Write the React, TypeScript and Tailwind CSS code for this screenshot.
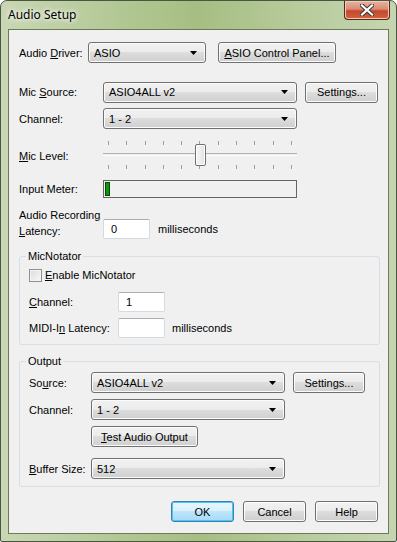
import React from "react";

const font = "font-['Liberation_Sans',Arial,sans-serif] text-[11px] text-black leading-[14px]";

const Arrow = () => (
  <svg width="7" height="4" viewBox="0 0 7 4">
    <polygon points="0,0 7,0 3.5,4" fill="#000" />
  </svg>
);

const Combo = ({ value, w }: { value: string; w: string }) => (
  <div
    className={`${w} h-[21px] flex items-center justify-between pl-[5px] pr-[8px] border border-[#707070] rounded-[3px] bg-[linear-gradient(#f2f2f2_0%,#ebebeb_50%,#dddddd_50%,#cfcfcf_100%)] shadow-[inset_0_0_0_1px_#fbfbfb]`}
  >
    <span>{value}</span>
    <Arrow />
  </div>
);

const Button = ({ children, w, primary }: { children: React.ReactNode; w: string; primary?: boolean }) => (
  <div
    className={
      primary
        ? `${w} h-[21px] flex items-center justify-center border border-[#3c7fb1] rounded-[3px] bg-[linear-gradient(#eaf6fd_0%,#d9f0fc_50%,#bee6fd_50%,#a7d9f5_100%)] shadow-[inset_0_0_0_1px_#48c6f4]`
        : `${w} h-[21px] flex items-center justify-center border border-[#707070] rounded-[3px] bg-[linear-gradient(#f2f2f2_0%,#ebebeb_50%,#dddddd_50%,#cfcfcf_100%)] shadow-[inset_0_0_0_1px_#fcfcfc]`
    }
  >
    {children}
  </div>
);

const TextBox = ({ value }: { value?: string }) => (
  <div className="w-[47px] h-[20px] flex items-center pl-[7px] bg-white border border-[#d5dae1] border-t-[#abadb3] rounded-[2px]">
    {value}
  </div>
);

const Ticks = () => (
  <div className="flex justify-between px-[5px] h-[4px]">
    {Array.from({ length: 11 }).map((_, i) => (
      <div key={i} className="w-px h-[4px] bg-[#a0a0a0]" />
    ))}
  </div>
);

const Slider = () => (
  <div className="relative w-[194px] h-[34px] pt-[2px]">
    <Ticks />
    <div className="mt-[8px] h-[3px] border-t border-[#b4b4b4] bg-[#e7eaea] border-b border-b-white" />
    <div className="mt-[9px]">
      <Ticks />
    </div>
    <div className="absolute left-[92px] top-[5px] w-[11px] h-[22px] border border-[#707070] rounded-[2px] bg-[linear-gradient(90deg,#f7f7f7,#e2e2e2)] shadow-[inset_0_0_0_1px_#fff]" />
  </div>
);

const CloseIcon = () => (
  <svg width="14" height="12" viewBox="0 0 14 12">
    <path d="M2 1.5 L12 10.5 M12 1.5 L2 10.5" stroke="#3a3a3a" strokeWidth="4.2" strokeLinecap="square" />
    <path d="M2 1.5 L12 10.5 M12 1.5 L2 10.5" stroke="#ffffff" strokeWidth="2.2" strokeLinecap="square" />
  </svg>
);

export default function App() {
  return (
    <div className="w-[397px] h-[542px] bg-white">
      <div className="w-[397px] h-[542px] flex flex-col border border-[#4b5543] rounded-t-[7px] rounded-b-[2px] bg-[linear-gradient(90deg,#c9d7b4_0%,#b2c894_30%,#a6be82_50%,#b7cb9b_75%,#c6d5b0_100%)]">
        {/* title bar */}
        <div className="h-[28px] flex items-start justify-between pl-[7px] pr-[6px]">
          <span className="mt-[6px] font-['Noto_Sans',sans-serif] text-[12px] leading-[16px] text-black [text-shadow:0_0_6px_#ffffff,0_0_4px_#ffffff]">
            Audio Setup
          </span>
          <div className="w-[46px] h-[19px] flex items-center justify-center border border-[#5d2418] border-t-0 rounded-b-[4px] bg-[linear-gradient(#e8b4a4_0%,#d98c74_45%,#c5482c_55%,#d0643f_100%)] shadow-[inset_0_0_0_1px_#f3c9bb]">
            <CloseIcon />
          </div>
        </div>

        {/* client */}
        <div className={`mx-[7px] h-[505px] border border-[#6c7a5b] bg-[#f0f0f0] flex flex-col pl-[10px] pr-[10px] ${font}`}>
          <div className="mt-[12px] flex items-center">
            <span className="w-[69px]">Audio <u>D</u>river:</span>
            <Combo value="ASIO" w="w-[118px]" />
            <div className="ml-[12px]">
              <Button w="w-[118px]"><span><u>A</u>SIO Control Panel...</span></Button>
            </div>
          </div>

          <div className="mt-[18px] flex items-center h-[22px]">
            <span className="w-[84px]">Mic <u>S</u>ource:</span>
            <Combo value="ASIO4ALL v2" w="w-[194px]" />
            <div className="ml-[8px]">
              <Button w="w-[73px]"><span>Settin<u>g</u>s...</span></Button>
            </div>
          </div>

          <div className="mt-[5px] flex items-center">
            <span className="w-[84px]">Channel:</span>
            <Combo value="1 - 2" w="w-[194px]" />
          </div>

          <div className="mt-[10px] flex items-center">
            <span className="w-[84px]"><u>M</u>ic Level:</span>
            <Slider />
          </div>

          <div className="mt-[7px] flex items-center">
            <span className="w-[84px]">Input Meter:</span>
            <div className="w-[194px] h-[18px] border border-[#646464] p-[1px]">
              <div className="w-[5px] h-full bg-[#00a000] border border-[#1b3a1b]" />
            </div>
          </div>

          <div className="mt-[9px] flex items-start">
            <span className="w-[84px] leading-[16px]">Audio Recording<br /><u>L</u>atency:</span>
            <div className="mt-[12px] flex items-center">
              <TextBox value="0" />
              <span className="ml-[8px]">milliseconds</span>
            </div>
          </div>

          <fieldset className="mt-[10px] w-[361px] border border-[#d5dfe5] rounded-[3px] pl-[9px] pb-[6px]">
            <legend className="-ml-[3px] px-[2px]">MicNotator</legend>
            <div className="mt-[5px] flex items-center h-[14px]">
              <div className="w-[13px] h-[13px] border border-[#8e8f8f] bg-[linear-gradient(135deg,#dcdcdc,#f8f8f8)] shadow-[inset_0_0_0_1px_#f4f4f4]" />
              <span className="ml-[3px]"><u>E</u>nable MicNotator</span>
            </div>
            <div className="mt-[10px] flex items-center">
              <span className="w-[89px]"><u>C</u>hannel:</span>
              <TextBox value="1" />
            </div>
            <div className="mt-[6px] flex items-center">
              <span className="w-[89px]">MIDI-I<u>n</u> Latency:</span>
              <TextBox />
              <span className="ml-[7px]">milliseconds</span>
            </div>
          </fieldset>

          <fieldset className="mt-[9px] w-[361px] border border-[#d5dfe5] rounded-[3px] pl-[9px] pb-[7px]">
            <legend className="-ml-[3px] px-[2px]">Output</legend>
            <div className="mt-[4px] flex items-center">
              <span className="w-[62px]">So<u>u</u>rce:</span>
              <Combo value="ASIO4ALL v2" w="w-[194px]" />
              <div className="ml-[8px]">
                <Button w="w-[72px]"><span>Settings...</span></Button>
              </div>
            </div>
            <div className="mt-[6px] flex items-center">
              <span className="w-[62px]">Channel:</span>
              <Combo value="1 - 2" w="w-[194px]" />
            </div>
            <div className="mt-[6px] pl-[62px]">
              <Button w="w-[107px]"><span><u>T</u>est Audio Output</span></Button>
            </div>
            <div className="mt-[11px] flex items-center">
              <span className="w-[62px]"><u>B</u>uffer Size:</span>
              <Combo value="512" w="w-[194px]" />
            </div>
          </fieldset>

          <div className="mt-[14px] flex justify-end gap-[9px]">
            <Button w="w-[63px]" primary>OK</Button>
            <Button w="w-[63px]">Cancel</Button>
            <Button w="w-[63px]">Help</Button>
          </div>
        </div>
      </div>
    </div>
  );
}
